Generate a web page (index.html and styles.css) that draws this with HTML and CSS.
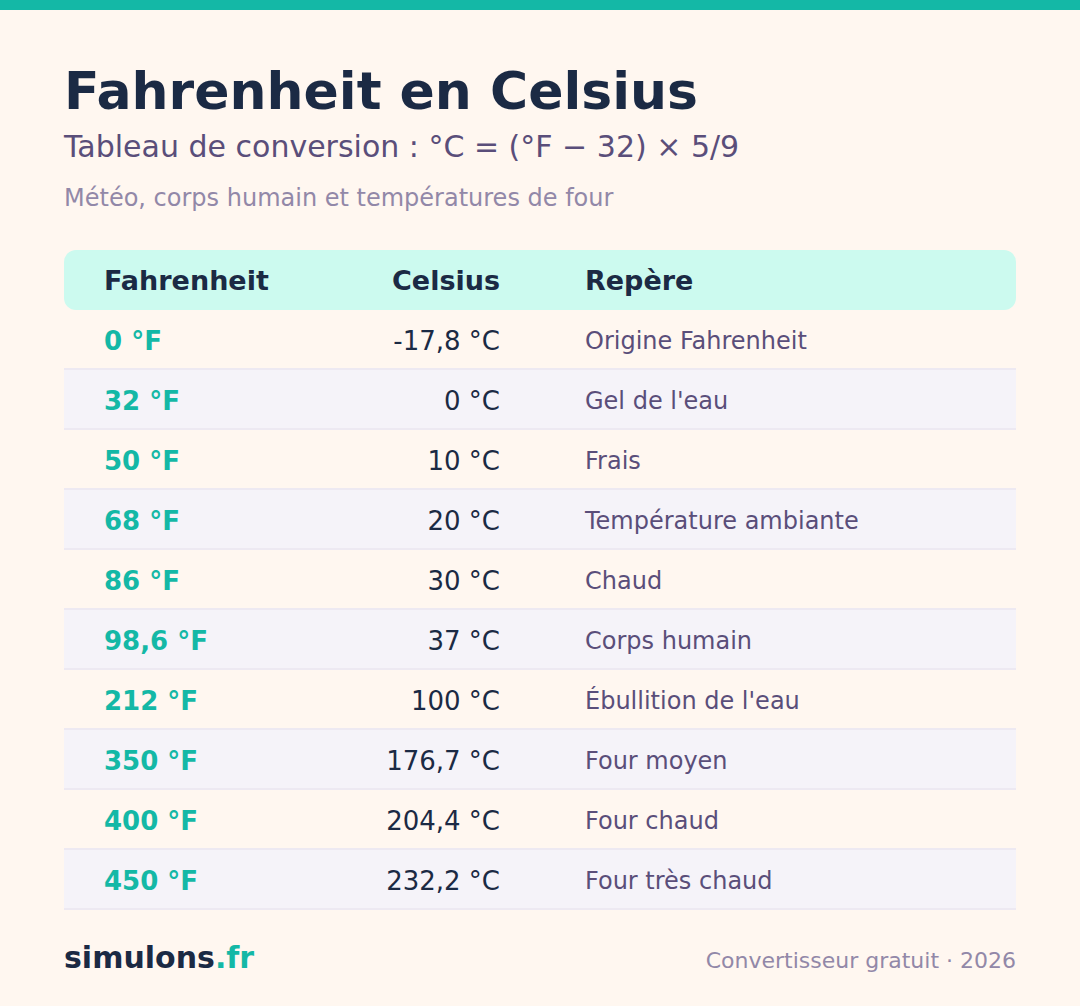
FILE: index.html
```html
<!DOCTYPE html>
<html lang="fr">
<head>
<meta charset="utf-8">
<link rel="stylesheet" href="styles.css">
</head>
<body>
<div class="topbar"></div>
<main class="page">
  <header class="intro">
    <h1 class="title">Fahrenheit en Celsius</h1>
    <p class="subtitle">Tableau de conversion : °C = (°F − 32) × 5/9</p>
    <p class="note">Météo, corps humain et températures de four</p>
  </header>
  <section class="table">
    <div class="row head">
      <div class="c1">Fahrenheit</div>
      <div class="c2">Celsius</div>
      <div class="c3">Repère</div>
    </div>
    <div class="row"><div class="c1">0 °F</div><div class="c2">-17,8 °C</div><div class="c3">Origine Fahrenheit</div></div>
    <div class="row alt"><div class="c1">32 °F</div><div class="c2">0 °C</div><div class="c3">Gel de l'eau</div></div>
    <div class="row"><div class="c1">50 °F</div><div class="c2">10 °C</div><div class="c3">Frais</div></div>
    <div class="row alt"><div class="c1">68 °F</div><div class="c2">20 °C</div><div class="c3">Température ambiante</div></div>
    <div class="row"><div class="c1">86 °F</div><div class="c2">30 °C</div><div class="c3">Chaud</div></div>
    <div class="row alt"><div class="c1">98,6 °F</div><div class="c2">37 °C</div><div class="c3">Corps humain</div></div>
    <div class="row"><div class="c1">212 °F</div><div class="c2">100 °C</div><div class="c3">Ébullition de l'eau</div></div>
    <div class="row alt"><div class="c1">350 °F</div><div class="c2">176,7 °C</div><div class="c3">Four moyen</div></div>
    <div class="row"><div class="c1">400 °F</div><div class="c2">204,4 °C</div><div class="c3">Four chaud</div></div>
    <div class="row alt"><div class="c1">450 °F</div><div class="c2">232,2 °C</div><div class="c3">Four très chaud</div></div>
  </section>
  <footer class="footer">
    <div class="brand">simulons<span class="tld">.fr</span></div>
    <div class="credit">Convertisseur gratuit · 2026</div>
  </footer>
</main>
</body>
</html>
```
FILE: styles.css
```css
* { box-sizing: border-box; }
html, body { margin: 0; padding: 0; }
body {
  background: #fff7f0;
  font-family: "DejaVu Sans", sans-serif;
  width: 1080px;
  height: 1006px;
  overflow: hidden;
}
.topbar { height: 10px; background: #14b8a6; }
.page { padding: 0 64px; }
.intro { padding-top: 49px; }
.title {
  margin: 0;
  font-size: 52px;
  line-height: 64px;
  font-weight: bold;
  color: #1b2a44;
}
.subtitle {
  margin: 4px 0 0;
  font-size: 30px;
  line-height: 40px;
  color: #5a4e7a;
}
.note {
  margin: 16px 0 0;
  font-size: 24px;
  line-height: 30px;
  color: #9288a8;
}
.table { margin-top: 37px; }
.row {
  display: grid;
  grid-template-columns: 200px 196px 1fr;
  align-items: center;
  height: 60px;
  padding: 3px 40px 0;
  border-bottom: 2px solid #ede9f2;
}
.row.alt { background: #f5f3f9; }
.row.head {
  background: #ccfaef;
  border-radius: 12px;
  border-bottom: none;
  font-weight: bold;
  padding-top: 0;
}
.c1 { font-size: 26px; }
.c2 { font-size: 26px; text-align: right; }
.c3 { font-size: 24px; padding-left: 85px; }
.row .c1 { color: #14b8a6; font-weight: bold; }
.row .c2 { color: #1b2a44; }
.row .c3 { color: #5a4e7a; }
.row.head .c1, .row.head .c2, .row.head .c3 {
  color: #1b2a44;
  font-size: 27px;
  font-weight: bold;
}
.footer {
  margin-top: 30px;
  display: flex;
  justify-content: space-between;
  align-items: baseline;
}
.brand {
  font-size: 30px;
  font-weight: bold;
  color: #1b2a44;
}
.tld { color: #14b8a6; }
.credit { font-size: 22px; color: #9288a8; }
```
